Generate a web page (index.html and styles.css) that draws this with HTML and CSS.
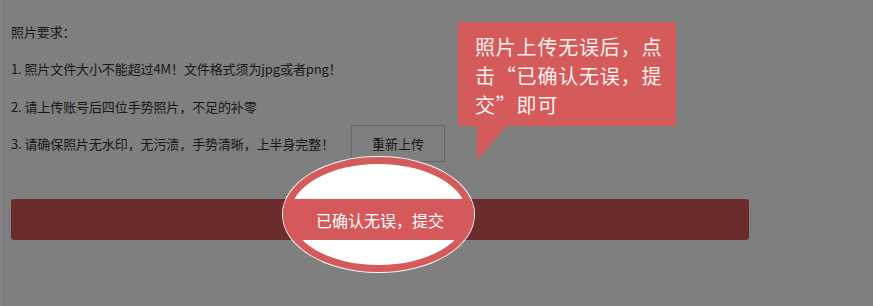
FILE: index.html
```html
<!DOCTYPE html>
<html lang="zh-CN">
<head>
<meta charset="utf-8">
<title>照片要求</title>
<link rel="stylesheet" href="styles.css">
</head>
<body>
<div class="page">
  <div class="rules">
    <div class="row">照片要求：</div>
    <div class="row">1. 照片文件大小不能超过4M！文件格式须为jpg或者png！</div>
    <div class="row">2. 请上传账号后四位手势照片，不足的补零</div>
    <div class="row">3. 请确保照片无水印，无污渍，手势清晰，上半身完整！<button class="reupload">重新上传</button></div>
  </div>
  <button class="submit">已确认无误，提交</button>
</div>
<div class="spotlight"></div>
<div class="tip">照片上传无误后，点<br>击“已确认无误，提<br>交”即可</div>
<div class="edge"></div>
</body>
</html>
```

FILE: styles.css
```css
html, body {
  margin: 0;
  padding: 0;
  background: #ffffff;
  overflow: hidden;
}
body {
  width: 873px;
  height: 306px;
  position: relative;
  font-family: "Noto Sans CJK SC", "Noto Sans", sans-serif;
  color: #333333;
}
.page {
  padding: 21px 0 0 11px;
}
.rules {
  display: flex;
  flex-direction: column;
  gap: 17.5px;
}
.row {
  height: 20px;
  display: flex;
  align-items: center;
  font-size: 13px;
  letter-spacing: -0.1px;
  white-space: nowrap;
}
.reupload {
  margin-left: 17px;
  height: 37px;
  padding: 0 20px;
  border: 1px solid #cfcfcf;
  background: #ffffff;
  color: #333333;
  font-family: inherit;
  font-size: 13px;
  line-height: 35px;
  box-sizing: border-box;
  width: 94px;
}
.submit {
  display: block;
  margin-top: 45.5px;
  width: 738px;
  height: 41px;
  border: 0;
  border-radius: 3px;
  background: #d5595b;
  color: #ffffff;
  font-family: inherit;
  font-size: 16px;
  padding: 0;
}
.spotlight {
  position: absolute;
  left: 283px;
  top: 157px;
  width: 191px;
  height: 115px;
  box-sizing: border-box;
  border: 7px solid #d55a5a;
  border-radius: 50%;
  box-shadow: 0 0 0 1px #ffffff, 0 0 0 3000px rgba(0, 0, 0, 0.5);
  z-index: 5;
}
.tip {
  position: absolute;
  left: 458px;
  top: 22px;
  width: 201px;
  height: 87px;
  padding: 10px 0 7px 17px;
  background: #d55a5a;
  color: #fdf1f1;
  font-family: "Noto Sans CJK SC", sans-serif;
  font-size: 20px;
  letter-spacing: 0.8px;
  line-height: 29px;
  white-space: nowrap;
  z-index: 10;
}
.tip::after {
  content: "";
  position: absolute;
  left: 19px;
  top: 100%;
  width: 0;
  height: 0;
  border-top: 34px solid #d55a5a;
  border-right: 30px solid transparent;
}
.edge {
  position: absolute;
  left: 1px;
  top: 0;
  width: 1px;
  height: 306px;
  background: rgba(255, 255, 255, 0.1);
  z-index: 10;
}
```
